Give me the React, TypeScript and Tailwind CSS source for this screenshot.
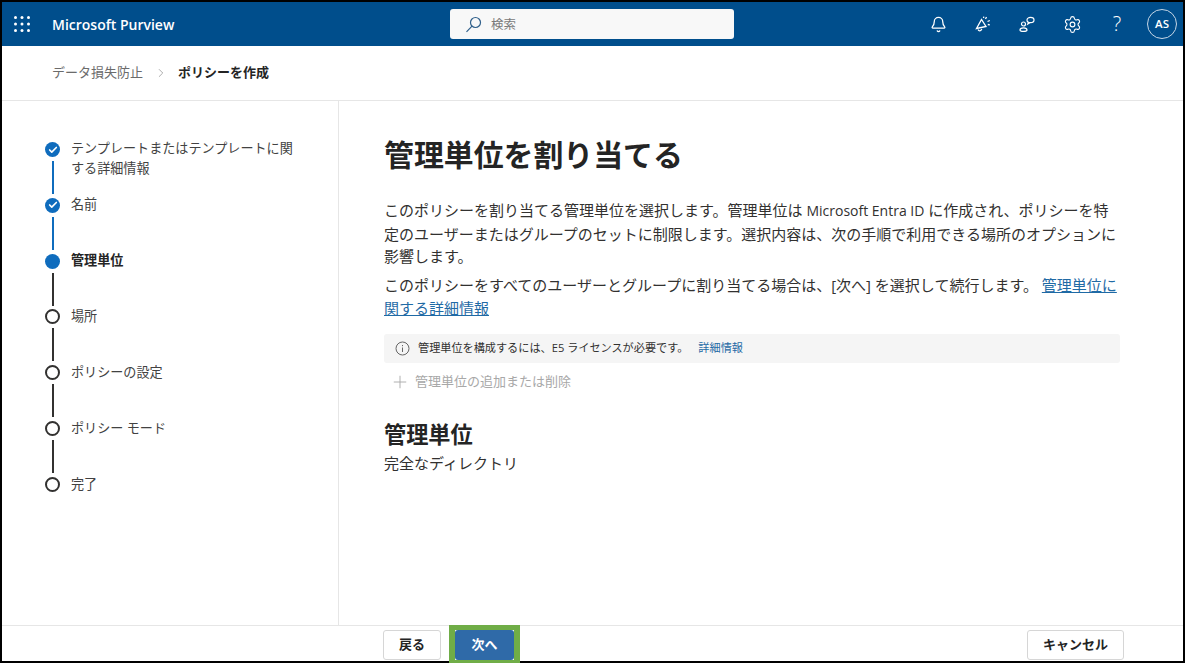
import React from "react";
import { Bell, Settings, Plus, ChevronRight, Check } from "lucide-react";

const font = "[font-family:'Open_Sans','Noto_Sans_CJK_JP',sans-serif]";

type Step = { label: React.ReactNode; state: "done" | "current" | "todo" };
const steps: Step[] = [
  { label: <>テンプレートまたはテンプレートに関<br />する詳細情報</>, state: "done" },
  { label: "名前", state: "done" },
  { label: "管理単位", state: "current" },
  { label: "場所", state: "todo" },
  { label: "ポリシーの設定", state: "todo" },
  { label: "ポリシー モード", state: "todo" },
  { label: "完了", state: "todo" },
];

function StepRow({ step, last }: { step: Step; last: boolean }) {
  return (
    <div className="flex h-[55.8px] items-start">
      <div className="flex w-[15px] flex-col items-center self-stretch">
        {step.state === "todo" ? (
          <div className="h-[15px] w-[15px] shrink-0 rounded-full border-2 border-[#323130] bg-white" />
        ) : (
          <div className="flex h-[15px] w-[15px] shrink-0 items-center justify-center rounded-full bg-[#0f6cbd]">
            {step.state === "done" && <Check size={10} strokeWidth={4} className="text-white" />}
          </div>
        )}
        {!last && (
          <div className={`mt-[4px] h-[33px] w-[2px] ${step.state === "done" ? "bg-[#0f6cbd]" : "bg-[#323130]"}`} />
        )}
      </div>
      <div
        className={`ml-[11px] w-[235px] text-[13.100px] leading-[20px] ${
          step.state === "todo" ? "-mt-[3px]" : "-mt-[4px]"
        } ${step.state === "current" ? "font-bold text-[#242424]" : "text-[#424242]"}`}
      >
        {step.label}
      </div>
    </div>
  );
}

export default function App() {
  return (
    <div className={`${font} flex h-[663px] w-[1185px] flex-col border-2 border-black bg-white`}>
      <header className="flex h-[44px] shrink-0 items-center bg-[#004e8c] text-white">
        <svg width="16" height="16" viewBox="0 0 16 16" className="ml-[12px]" fill="white">
          {[1.5, 8, 14.5].flatMap((y) =>
            [1.5, 8, 14.5].map((x) => <circle key={`${x}-${y}`} cx={x} cy={y} r="1.5" />)
          )}
        </svg>
        <div className="ml-[22px] w-[398px] text-[14px] font-semibold">Microsoft Purview</div>
        <div className="flex h-[30px] w-[284px] items-center rounded-[3px] bg-[#f8f8f8] pl-[15px]">
          <svg width="17" height="17" viewBox="0 0 17 17" fill="none" stroke="#2f5f8a" strokeWidth="1.2">
            <circle cx="10.5" cy="6.5" r="5" />
            <path d="M7 10.2 1.5 15.8" />
          </svg>
          <span className="mt-[2px] ml-[9px] text-[12.500px] text-[#7a7a7a]">検索</span>
        </div>
        <div className="ml-auto flex items-center">
          <Bell size={17} strokeWidth={1.8} className="mr-[28.500px]" />
          <svg width="16" height="17" viewBox="0 0 16 17" fill="none" stroke="white" strokeWidth="1.3" className="mr-[28px]">
            <path d="M1.5 12.500 6.500 3.500l4.500 7z" />
            <path d="M3 13.500c.8 1.800 3 1.800 3.800-.6" />
            <path d="M10.500 3 11.500 1M12.500 5.500l2.300-1M12.800 8.500l2 .4M8.500 2 8.800.6" />
          </svg>
          <svg width="16" height="16" viewBox="0 0 16 16" fill="none" stroke="white" strokeWidth="1.2" className="mr-[27.500px]">
            <circle cx="4.5" cy="8" r="2" />
            <path d="M1 14c0-1.5 1.5-2.2 3.5-2.2S8 12.5 8 14c0 .8-1.5 1.400-3.500 1.400S1 14.800 1 14z" />
            <ellipse cx="11.500" cy="4" rx="3.500" ry="2.600" />
            <path d="M9.500 6.200 8.800 8l2-1.300" />
          </svg>
          <Settings size={19} strokeWidth={1.4} className="mr-[30.500px]" />
          <span className="mr-[25px] w-[10px] text-center text-[20px] leading-none font-light">?</span>
          <div className="mr-[6px] flex h-[30px] w-[30px] items-center justify-center rounded-full border border-[#c5d6e6] text-[11.500px] font-semibold">
            AS
          </div>
        </div>
      </header>

      <nav className="flex h-[55px] shrink-0 items-center border-b border-[#e6e6e6] pl-[50px] text-[13px]">
        <span className="text-[#6b6b6b]">データ損失防止</span>
        <ChevronRight size={14} strokeWidth={1.2} className="mr-[10px] ml-[11px] text-[#8a8a8a]" />
        <span className="font-bold text-[#242424]">ポリシーを作成</span>
      </nav>

      <div className="flex min-h-0 flex-1">
        <aside className="w-[337px] shrink-0 border-r border-[#e6e6e6] pt-[41px] pl-[43px]">
          {steps.map((s, i) => (
            <StepRow key={i} step={s} last={i === steps.length - 1} />
          ))}
        </aside>
        <main className="min-w-0 flex-1 pt-[32px] pl-[45px] text-[#323130]">
          <h1 className="text-[29.900px] leading-[44px] font-bold text-[#242424]">管理単位を割り当てる</h1>
          <p className="mt-[22px] whitespace-nowrap text-[15px] leading-[22.500px]">
            このポリシーを割り当てる管理単位を選択します。管理単位は <span className="text-[14px]">Microsoft Entra ID</span> に作成され、ポリシーを特<br />
            定のユーザーまたはグループのセットに制限します。選択内容は、次の手順で利用できる場所のオプションに<br />
            影響します。
          </p>
          <p className="mt-[6px] whitespace-nowrap text-[15px] leading-[23px]">
            このポリシーをすべてのユーザーとグループに割り当てる場合は、[次へ] を選択して続行します。{" "}
            <span className="text-[#1f6aa5] underline">管理単位に</span>
            <br />
            <span className="text-[#1f6aa5] underline">関する詳細情報</span>
          </p>
          <div className="mt-[14px] flex h-[29px] w-[736px] items-center rounded-[3px] bg-[#f5f5f5] pl-[11px] text-[11.150px] text-[#323130]">
            <svg width="15" height="15" viewBox="0 0 15 15" fill="none" stroke="#666" strokeWidth="1">
              <circle cx="7.500" cy="7.500" r="6.500" />
              <path d="M7.500 6.500v4.500M7.500 4v1.200" />
            </svg>
            <span className="ml-[8px]">管理単位を構成するには、E5 ライセンスが必要です。</span>
            <span className="ml-[10px] text-[#1f6aa5]">詳細情報</span>
          </div>
          <div className="mt-[9px] flex items-center text-[13px] text-[#a8a8a8]">
            <Plus size={20} strokeWidth={1.1} className="ml-[6px]" />
            <span className="ml-[5px]">管理単位の追加または削除</span>
          </div>
          <h2 className="mt-[27px] text-[22.200px] leading-[32px] font-bold text-[#242424]">管理単位</h2>
          <p className="mt-[1px] text-[15px] leading-[22px]">完全なディレクトリ</p>
        </main>
      </div>

      <footer className="flex h-[36px] shrink-0 items-start border-t border-[#e6e6e6] pt-[4px] pl-[381px] text-[13px] font-bold text-[#242424]">
        <button className="flex h-[30px] w-[58px] items-center justify-center rounded-[3px] border border-[#d6d6d6] bg-white">戻る</button>
        <div className="relative z-10 -mt-[5px] ml-[8px] border-x-[6px] border-t-[5px] border-b-[3px] border-[#70ad47]">
          <button className="flex h-[30px] w-[59px] items-center justify-center rounded-[3px] bg-[#2f6aa8] text-white">次へ</button>
        </div>
        <button className="ml-[507px] flex h-[30px] w-[97px] items-center justify-center rounded-[3px] border border-[#d6d6d6] bg-white">キャンセル</button>
      </footer>
    </div>
  );
}
